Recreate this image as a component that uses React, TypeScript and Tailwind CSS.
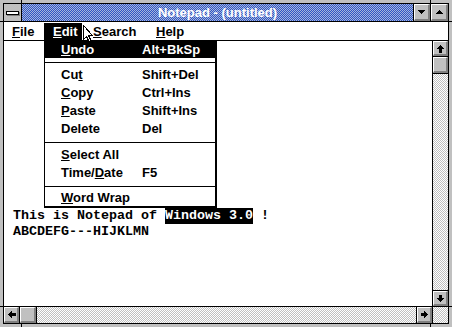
const dither =
  "bg-[image:repeating-conic-gradient(#c0c0c0_0_25%,#ffffff_0_50%)] bg-[length:2px_2px]";
const titleDither =
  "bg-[image:repeating-conic-gradient(#2f55c4_0_25%,#a6b6dc_0_50%)] bg-[length:2px_2px]";

const Bevel = ({ children }: { children?: React.ReactNode }) => (
  <div className="flex h-full w-full items-center justify-center border-t border-l border-t-white border-l-white border-r-2 border-b-2 border-r-[#808080] border-b-[#808080] bg-[#c0c0c0]">
    {children}
  </div>
);

const Arrow = ({ dir }: { dir: "up" | "down" | "left" | "right" }) => {
  const rot = { up: 0, right: 90, down: 180, left: 270 }[dir];
  return (
    <svg width="9" height="9" viewBox="0 0 9 9" shapeRendering="crispEdges" style={{ transform: `rotate(${rot}deg)` }}>
      <polygon points="4.5,1 8.5,5 6,5 6,8.5 3,8.5 3,5 0.5,5" fill="#000" />
    </svg>
  );
};

const U = ({ children }: { children: React.ReactNode }) => (
  <span className="underline decoration-1 underline-offset-[1px]">{children}</span>
);

const Sep = () => <div className="mt-[4px] mb-[3px] h-px bg-black" />;

const Item = ({ label, accel, h = "h-[18px]" }: { label: React.ReactNode; accel?: string; h?: string }) => (
  <div className={`flex ${h} items-center pl-[16px]`}>
    <span className="w-[81px]">{label}</span>
    {accel && <span>{accel}</span>}
  </div>
);

export default function App() {
  return (
    <div className="relative h-[327px] w-[452px] overflow-hidden bg-[#c0c0c0] p-[3px] font-['Liberation_Sans',Arial,sans-serif] text-[13px] font-bold text-black select-none">
      <div className="flex h-full flex-col border border-black bg-white">
        {/* title bar */}
        <div className="flex h-[18px] shrink-0 border-b border-black">
          <div className="flex w-[18px] items-center justify-center border-r border-black bg-[#c0c0c0]">
            <div className="h-[4px] w-[13px] border border-black bg-white shadow-[1px_1px_0_#808080]" />
          </div>
          <div className={`flex flex-1 items-center justify-center text-white ${titleDither}`}>
            Notepad - (untitled)
          </div>
          <div className="w-[17px] border-l border-black">
            <Bevel>
              <svg width="7" height="4" viewBox="0 0 7 4" shapeRendering="crispEdges">
                <polygon points="0,0 7,0 3.5,4" fill="#000" />
              </svg>
            </Bevel>
          </div>
          <div className="w-[18px] border-l border-black">
            <Bevel>
              <svg width="7" height="4" viewBox="0 0 7 4" shapeRendering="crispEdges">
                <polygon points="0,4 7,4 3.5,0" fill="#000" />
              </svg>
            </Bevel>
          </div>
        </div>

        {/* menu bar */}
        <div className="flex h-[19px] shrink-0 border-b border-black leading-[17px]">
          <span className="w-[40px] pl-[8px] pt-px">
            <U>F</U>ile
          </span>
          <span className="mt-px w-[38px] bg-black pl-[9px] text-white">
            <U>E</U>dit
          </span>
          <span className="w-[66px] pl-[11px] pt-px">
            <U>S</U>earch
          </span>
          <span className="pl-[8px] pt-px">
            <U>H</U>elp
          </span>
        </div>

        {/* client */}
        <div className="flex min-h-0 flex-1">
          <div className="flex-1 bg-white pl-[9px] pt-[167px] font-['Liberation_Mono',monospace] text-[13.33px] leading-[16px] whitespace-pre">
            <div>
              {"This is Notepad of "}
              <span className="inline-block h-[16px] bg-black text-white">Windows 3.0</span>
              {" !"}
            </div>
            <div>ABCDEFG---HIJKLMN</div>
          </div>
          <div className="flex w-[16px] flex-col border-l border-black">
            <div className="h-[16px] border-b border-black">
              <Bevel>
                <Arrow dir="up" />
              </Bevel>
            </div>
            <div className="h-[17px] border-b border-black">
              <Bevel />
            </div>
            <div className={`flex-1 ${dither}`} />
            <div className="h-[16px] border-t border-black">
              <Bevel>
                <Arrow dir="down" />
              </Bevel>
            </div>
          </div>
        </div>

        {/* horizontal scroll */}
        <div className="flex h-[17px] shrink-0 border-t border-black">
          <div className="w-[16px] border-r border-black">
            <Bevel>
              <Arrow dir="left" />
            </Bevel>
          </div>
          <div className="w-[17px] border-r border-black">
            <Bevel />
          </div>
          <div className={`flex-1 ${dither}`} />
          <div className="w-[16px] border-l border-black">
            <Bevel>
              <Arrow dir="right" />
            </Bevel>
          </div>
          <div className={`w-[16px] border-l border-black ${dither}`} />
        </div>
      </div>

      {/* frame corner ticks */}
      <span className="absolute top-0 left-[21px] h-[3px] w-px bg-black" />
      <span className="absolute top-0 left-[430px] h-[3px] w-px bg-black" />
      <span className="absolute bottom-0 left-[21px] h-[3px] w-px bg-black" />
      <span className="absolute bottom-0 left-[430px] h-[3px] w-px bg-black" />
      <span className="absolute top-[21px] left-0 h-px w-[3px] bg-black" />
      <span className="absolute top-[306px] left-0 h-px w-[3px] bg-black" />
      <span className="absolute top-[21px] right-0 h-px w-[3px] bg-black" />
      <span className="absolute top-[306px] right-0 h-px w-[3px] bg-black" />

      {/* Edit dropdown */}
      <div className="absolute top-[40px] left-[44px] w-[173px] border-t border-l border-r-2 border-b-2 border-black bg-white">
        <div className="flex h-[17px] items-center bg-black pl-[16px] text-white">
          <span className="w-[81px]">
            <U>U</U>ndo
          </span>
          <span>Alt+BkSp</span>
        </div>
        <Sep />
        <Item label={<>Cu<U>t</U></>} accel="Shift+Del" />
        <Item label={<><U>C</U>opy</>} accel="Ctrl+Ins" />
        <Item label={<><U>P</U>aste</>} accel="Shift+Ins" />
        <Item label="Delete" accel="Del" />
        <Sep />
        <Item label={<><U>S</U>elect All</>} />
        <Item label={<>Time/<U>D</U>ate</>} accel="F5" />
        <Sep />
        <Item label={<><U>W</U>ord Wrap</>} h="h-[16px]" />
      </div>

      {/* mouse pointer */}
      <svg className="absolute top-[24px] left-[82px]" width="12" height="19" viewBox="0 0 12 19" shapeRendering="crispEdges">
        <path d="M1.5,1.5 L1.5,15.5 L4.5,12.5 L7,17.5 L9,16.5 L6.5,11.5 L10.5,11.5 Z" fill="#fff" stroke="#000" strokeWidth="1" />
      </svg>
    </div>
  );
}
